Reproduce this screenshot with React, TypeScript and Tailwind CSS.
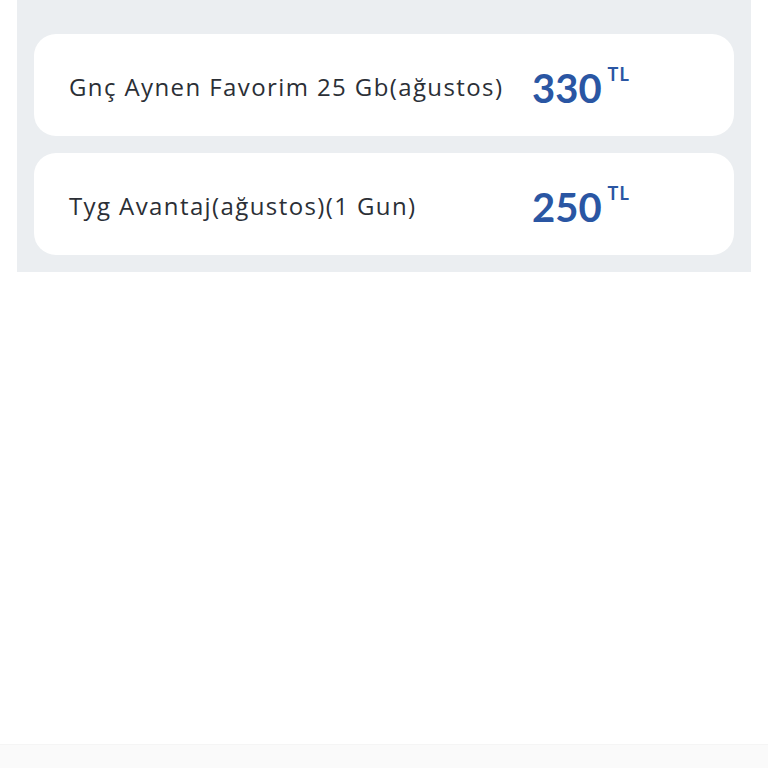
import React from 'react';

interface Paket {
  ad: string;
  fiyat: string;
}

const paketler: Paket[] = [
  { ad: 'Gnç Aynen Favorim 25 Gb(ağustos)', fiyat: '330' },
  { ad: 'Tyg Avantaj(ağustos)(1 Gun)', fiyat: '250' },
];

const PaketKart: React.FC<{ paket: Paket }> = ({ paket }) => (
  <div className="flex items-center h-[102px] rounded-[22px] bg-white pl-[35px]">
    <div
      className="w-[463px] text-[24px] font-medium text-[#2b2f36] leading-none pt-[4px] tracking-[1.4px]"
      style={{ fontFamily: '"Open Sans", sans-serif' }}
    >
      {paket.ad}
    </div>
    <div className="flex items-start text-[#2a56a3] font-bold">
      <span className="text-[40px] leading-none pt-[6px]">{paket.fiyat}</span>
      <span className="text-[18px] leading-none ml-[6px] pt-[3px] tracking-[1px]">TL</span>
    </div>
  </div>
);

export default function App() {
  return (
    <div className="flex flex-col h-[768px] bg-white" style={{ fontFamily: 'Lato, "Noto Sans", sans-serif' }}>
      <div className="mx-[17px] bg-[#ebeef1] px-[17px] pt-[34px] pb-[17px] flex flex-col gap-[17px]">
        {paketler.map((p) => (
          <PaketKart key={p.ad} paket={p} />
        ))}
      </div>
      <div className="flex-1" />
      <div className="h-[24px] bg-[#fafafa] border-t border-[#f5f5f5]" />
    </div>
  );
}
